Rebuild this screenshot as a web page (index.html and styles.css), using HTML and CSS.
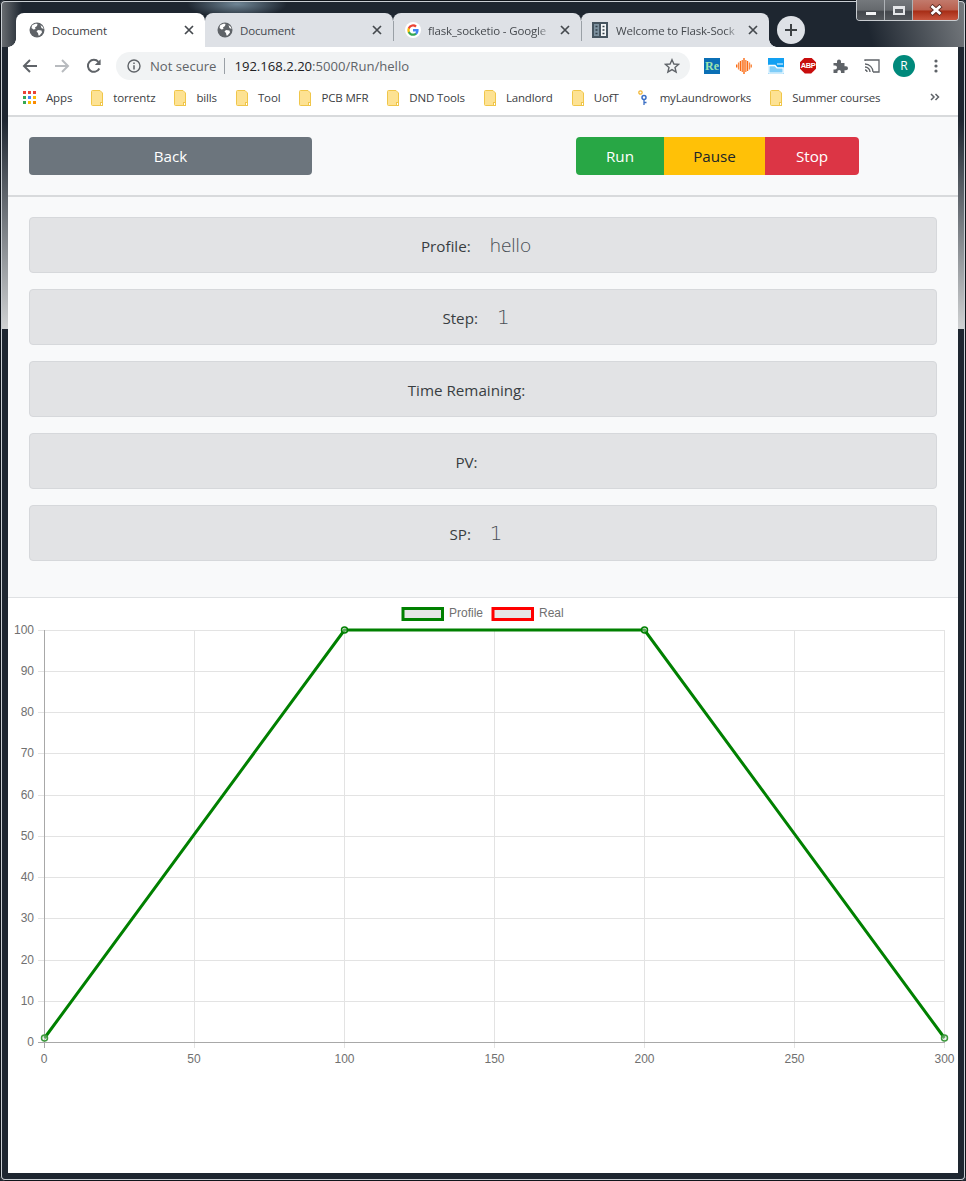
FILE: index.html
```html
<!DOCTYPE html>
<html lang="en">
<head>
<meta charset="utf-8">
<title>Document</title>
<link rel="stylesheet" href="styles.css">
</head>
<body>
<div class="window">
  <div class="wincontrols">
    <div class="wc wc-min"><span class="wc-min-bar"></span></div>
    <div class="wc wc-max"><span class="wc-max-box"></span></div>
    <div class="wc wc-close">
      <svg width="16" height="12" viewBox="0 0 16 12"><path d="M3 1.500 L13 10.500 M13 1.500 L3 10.500" stroke="#5b2a22" stroke-width="4.500"/><path d="M3.500 2 L12.500 10 M12.500 2 L3.500 10" stroke="#fff" stroke-width="2.800"/></svg>
    </div>
  </div>
  <div class="tabstrip">
    <div class="tab tab-active">
      <svg class="favicon" viewBox="0 0 16 16"><use href="#globe"/></svg>
      <span class="tab-title">Document</span>
      <svg class="tab-x" viewBox="0 0 10 10"><path d="M1 1 L9 9 M9 1 L1 9"/></svg>
    </div>
    <div class="tab">
      <svg class="favicon" viewBox="0 0 16 16"><use href="#globe"/></svg>
      <span class="tab-title">Document</span>
      <svg class="tab-x" viewBox="0 0 10 10"><path d="M1 1 L9 9 M9 1 L1 9"/></svg>
    </div>
    <div class="tab tab-sep">
      <svg class="favicon" viewBox="0 0 16 16">
        <circle cx="8" cy="8" r="8" fill="#fff"/>
        <path d="M13.600 8.200c0-.5 0-.9-.1-1.300H8v2.500h3.100a2.700 2.700 0 0 1-1.100 1.700v1.400h1.800c1.100-1 1.800-2.500 1.800-4.300z" fill="#4285f4"/>
        <path d="M8 13.800c1.500 0 2.800-.5 3.800-1.400L10 11c-.5.300-1.200.6-2 .6-1.500 0-2.800-1-3.200-2.400H2.900v1.500A5.800 5.800 0 0 0 8 13.800z" fill="#34a853"/>
        <path d="M4.800 9.200a3.500 3.500 0 0 1 0-2.300V5.400H2.900a5.800 5.800 0 0 0 0 5.300z" fill="#fbbc05"/>
        <path d="M8 4.500c.9 0 1.600.3 2.200.9l1.600-1.600A5.800 5.800 0 0 0 2.900 5.400l1.900 1.500C5.200 5.500 6.500 4.500 8 4.500z" fill="#ea4335"/>
      </svg>
      <span class="tab-title tab-fade">flask_socketio - Google</span>
      <svg class="tab-x" viewBox="0 0 10 10"><path d="M1 1 L9 9 M9 1 L1 9"/></svg>
    </div>
    <div class="tab tab-sep tab-last">
      <svg class="favicon" viewBox="0 0 16 16">
        <rect x=".5" y=".5" width="15" height="15" fill="#46545f" stroke="#46545f"/>
        <rect x="2" y="2" width="5" height="12" fill="#7d919f"/>
        <rect x="9" y="2" width="5" height="12" fill="#f4f6f7"/>
        <path d="M3.500 4.500h2M3.500 8h2M3.500 11.500h2" stroke="#33404a" stroke-width="1.300"/>
        <path d="M10.500 4.500h2M10.500 8h2M10.500 11.500h2" stroke="#33404a" stroke-width="1.300"/>
      </svg>
      <span class="tab-title tab-fade">Welcome to Flask-Sock</span>
      <svg class="tab-x" viewBox="0 0 10 10"><path d="M1 1 L9 9 M9 1 L1 9"/></svg>
    </div>
    <div class="newtab">
      <svg width="14" height="14" viewBox="0 0 14 14"><path d="M7 1 V13 M1 7 H13" stroke="#3c4043" stroke-width="2"/></svg>
    </div>
  </div>

  <div class="toolbar">
    <div class="navbtn">
      <svg width="16" height="16" viewBox="0 0 16 16"><path d="M15 8H2 M8 2 L2 8 L8 14" class="nav-stroke"/></svg>
    </div>
    <div class="navbtn">
      <svg width="16" height="16" viewBox="0 0 16 16"><path d="M1 8H14 M8 2 L14 8 L8 14" class="nav-stroke nav-off"/></svg>
    </div>
    <div class="navbtn">
      <svg width="16" height="16" viewBox="0 0 16 16"><path d="M13.300 10.500 A6 6 0 1 1 12.400 3.800" class="nav-stroke"/><path d="M14.600 1.200 V7 H8.800 Z" fill="#5f6368"/></svg>
    </div>
    <div class="omnibox">
      <svg class="info" width="14" height="14" viewBox="0 0 14 14"><circle cx="7" cy="7" r="6" fill="none" stroke="#5f6368" stroke-width="1.400"/><path d="M7 6.200V10.400 M7 3.600V5" stroke="#5f6368" stroke-width="1.500"/></svg>
      <span class="notsecure">Not secure</span>
      <span class="omni-sep"></span>
      <span class="url"><span class="url-host">192.168.2.20</span>:5000/Run/hello</span>
      <svg class="star" width="16" height="16" viewBox="0 0 16 16"><path d="M8 1.700 L9.900 6 L14.500 6.400 L11 9.500 L12.100 14 L8 11.600 L3.900 14 L5 9.500 L1.500 6.400 L6.100 6 Z" fill="none" stroke="#5f6368" stroke-width="1.400"/></svg>
    </div>
    <div class="extensions">
      <div class="ext ext-re">Re</div>
      <svg class="ext" viewBox="0 0 16 16">
        <path d="M.7 6.500v3 M4.500 3v10 M8 0v16 M11.500 3v10" stroke="#fb6a12" stroke-width="1.400"/>
        <path d="M2.600 4.500v7 M6.300 2v12 M9.800 2v12 M13.500 4.500v7 M15.300 6.500v3" stroke="#f98b45" stroke-width="1.400"/>
      </svg>
      <svg class="ext" viewBox="0 0 16 16"><rect width="16" height="16" fill="#12a0f2"/><path d="M.8 15.200V7.500H7L9 9.800H15.200V15.200Z" fill="#7fcdf8" stroke="#fff" stroke-width="1.300"/><path d="M9 6H15" stroke="#fff"/></svg>
      <div class="ext ext-abp">ABP</div>
      <svg class="ext" viewBox="0 0 16 16"><path d="M1.500 5H5V3.500a2 2 0 0 1 4 0V5h3.500v3.300H14a2 2 0 0 1 0 4h-1.500V15H9v-1.300a1.800 1.800 0 0 0-3.600 0V15H1.500v-3.500H3a2 2 0 0 0 0-4H1.500z" fill="#5f6368"/></svg>
      <svg class="ext" viewBox="0 0 16 16"><path d="M1 3V2h14v12H9" fill="none" stroke="#5f6368" stroke-width="1.300"/><path d="M1 6a8 8 0 0 1 8 8 M1 9a5 5 0 0 1 5 5 M1 12a2 2 0 0 1 2 2" fill="none" stroke="#5f6368" stroke-width="1.300"/></svg>
    </div>
    <div class="avatar">R</div>
    <svg class="menu" width="4" height="14" viewBox="0 0 4 14"><circle cx="2" cy="2" r="1.600"/><circle cx="2" cy="7" r="1.600"/><circle cx="2" cy="12" r="1.600"/></svg>
  </div>

  <div class="bookmarks">
    <div class="bm">
      <svg class="bm-apps" width="13" height="13" viewBox="0 0 13 13">
        <rect x="0" y="0" width="3" height="3" fill="#ea4335"/><rect x="5" y="0" width="3" height="3" fill="#ea4335"/><rect x="10" y="0" width="3" height="3" fill="#ea4335"/>
        <rect x="0" y="5" width="3" height="3" fill="#34a853"/><rect x="5" y="5" width="3" height="3" fill="#4285f4"/><rect x="10" y="5" width="3" height="3" fill="#fbbc05"/>
        <rect x="0" y="10" width="3" height="3" fill="#34a853"/><rect x="5" y="10" width="3" height="3" fill="#fbbc05"/><rect x="10" y="10" width="3" height="3" fill="#fb8c00"/>
      </svg>Apps
    </div>
    <div class="bm"><svg class="folder"><use href="#folder"/></svg>torrentz</div>
    <div class="bm"><svg class="folder"><use href="#folder"/></svg>bills</div>
    <div class="bm"><svg class="folder"><use href="#folder"/></svg>Tool</div>
    <div class="bm"><svg class="folder"><use href="#folder"/></svg>PCB MFR</div>
    <div class="bm"><svg class="folder"><use href="#folder"/></svg>DND Tools</div>
    <div class="bm"><svg class="folder"><use href="#folder"/></svg>Landlord</div>
    <div class="bm"><svg class="folder"><use href="#folder"/></svg>UofT</div>
    <div class="bm">
      <svg class="folder" viewBox="0 0 12 16"><circle cx="2.500" cy="2.500" r="1.700" fill="none" stroke="#f2b632" stroke-width="1.200"/><circle cx="6" cy="7.500" r="2" fill="none" stroke="#3b6fc4" stroke-width="1.500"/><path d="M6 9.500V15 M6 12.500h2.500" stroke="#3b6fc4" stroke-width="1.300"/></svg>myLaundroworks
    </div>
    <div class="bm"><svg class="folder"><use href="#folder"/></svg>Summer courses</div>
    <svg class="bm-more" width="10" height="8" viewBox="0 0 10 8"><path d="M1 1 L4 4 L1 7 M5.500 1 L8.500 4 L5.500 7" fill="none" stroke="#5f6368" stroke-width="1.500"/></svg>
  </div>

  <main class="page">
    <section class="controls">
      <div class="btn btn-back">Back</div>
      <div class="btn-group">
        <div class="btn btn-run">Run</div>
        <div class="btn btn-pause">Pause</div>
        <div class="btn btn-stop">Stop</div>
      </div>
    </section>
    <section class="status">
      <div class="alert">Profile: <span class="value">hello</span></div>
      <div class="alert">Step: <span class="value value-num">1</span></div>
      <div class="alert">Time Remaining: <span class="value"></span></div>
      <div class="alert">PV: <span class="value"></span></div>
      <div class="alert">SP: <span class="value value-num">1</span></div>
    </section>
    <section class="chart">
      <svg class="chart-svg" width="950" height="575" viewBox="8 598 950 575">
        <g class="grid">
          <path d="M194.500 630V1048 M344.500 630V1048 M494.500 630V1048 M644.500 630V1048 M794.500 630V1048 M944.500 630V1048"/>
          <path d="M38 630.500H945 M38 671.500H945 M38 712.500H945 M38 753.500H945 M38 795.500H945 M38 836.500H945 M38 877.500H945 M38 918.500H945 M38 960.500H945 M38 1001.500H945"/>
        </g>
        <g class="axis">
          <path d="M44.500 630V1048 M38 1042.500H945"/>
        </g>
        <g class="ticks ticks-y">
          <text x="34" y="634">100</text><text x="34" y="675">90</text><text x="34" y="716">80</text><text x="34" y="757">70</text><text x="34" y="799">60</text><text x="34" y="840">50</text><text x="34" y="881">40</text><text x="34" y="922">30</text><text x="34" y="964">20</text><text x="34" y="1005">10</text><text x="34" y="1046">0</text>
        </g>
        <g class="ticks ticks-x">
          <text x="44" y="1063">0</text><text x="194" y="1063">50</text><text x="344.500" y="1063">100</text><text x="494.500" y="1063">150</text><text x="644.500" y="1063">200</text><text x="794.500" y="1063">250</text><text x="944.500" y="1063">300</text>
        </g>
        <polyline class="series" points="44.500,1038 344.500,630 644.500,630 944.500,1038"/>
        <g class="points">
          <circle class="pt-end" cx="44.500" cy="1038" r="3"/><circle cx="344.500" cy="630" r="3"/><circle cx="644.500" cy="630" r="3"/><circle class="pt-end" cx="944.500" cy="1038" r="3"/>
        </g>
        <rect class="legend-box legend-green" x="403" y="608.500" width="39.500" height="11"/>
        <text class="legend-text" x="449" y="617">Profile</text>
        <rect class="legend-box legend-red" x="493" y="608.500" width="39.500" height="11"/>
        <text class="legend-text" x="539" y="617">Real</text>
      </svg>
    </section>
  </main>
</div>

<svg class="defs" width="0" height="0">
  <defs>
    <symbol id="globe" viewBox="0 0 16 16">
      <circle cx="8" cy="8" r="7.500" fill="#5f6368"/>
      <path d="M3 3.500 C5 2 7 1.500 8.500 2 L8 4 L6 5.500 L6.500 7 L4.500 7.500 L2.500 6 Z M9 8 L12.500 8.500 L13 10.500 L10.500 13.500 L9.500 13.500 L9 11 L7.500 9.500 Z M11.500 3 L14 5 L14.500 7 L12.500 6 Z" fill="#fff"/>
    </symbol>
    <symbol id="folder" viewBox="0 0 12 16">
      <path d="M1.500.5H9L11.500 3V12.500H9.500V15.500H1.500a1 1 0 0 1-1-1V1.500a1 1 0 0 1 1-1z" fill="#fde293" stroke="#f0c64a"/>
      <rect x="9.500" y="12.500" width="2" height="3" fill="#fff" stroke="#f0c64a"/>
    </symbol>
  </defs>
</svg>
</body>
</html>
```

FILE: styles.css
```css
* { box-sizing: border-box; }

html, body {
  margin: 0;
  padding: 0;
  width: 966px;
  height: 1181px;
  overflow: hidden;
  background: #1e2630;
}

.defs { position: absolute; }

.window {
  position: relative;
  width: 966px;
  height: 1181px;
  padding: 0 8px 8px;
  border-radius: 5px;
  box-shadow: inset 0 0 0 1px #10151b, inset 0 0 0 2px #c9ced3;
  background:
    radial-gradient(ellipse 50px 14px at 237px 4px, #6f8595 0, rgba(111,133,149,0) 100%),
    linear-gradient(75deg, rgba(122,126,130,0) 35%, #787c80 100%) right top / 150px 47px no-repeat,
    linear-gradient(to right, #6e7276 0, rgba(110,114,118,0) 22px) 0 0 / 100% 47px no-repeat,
    linear-gradient(to bottom, #1e2630 0, #1e2630 120px, #d0d2d3 329px, #1e2630 329px, #1e2630 100%);
  font-family: "Open Sans", "Noto Sans", sans-serif;
}

/* Window caption buttons */
.wincontrols {
  position: absolute;
  top: 0;
  right: 7px;
  display: flex;
  width: 103px;
  height: 21px;
  border: 1px solid #c8ccd0;
  border-top: 0;
  border-radius: 0 0 4px 4px;
  overflow: hidden;
}
.wc {
  display: flex;
  align-items: center;
  justify-content: center;
  height: 100%;
}
.wc-min, .wc-max {
  width: 28px;
  background: linear-gradient(to bottom, #74787c 0, #65696d 50%, #43474c 58%, #54585c 100%);
  border-right: 1px solid #aeb2b6;
}
.wc-close {
  flex: 1;
  background: linear-gradient(to bottom, #c27a6c 0, #b9604f 48%, #a82e17 56%, #c8553e 100%);
}
.wc-min-bar { width: 10px; height: 3px; background: #f2f3f4; margin-top: 6px; }
.wc-max-box { width: 12px; height: 9px; border: 2px solid #e4e6e8; border-top-width: 3px; background: #5a5e63; }

/* Tabs */
.tabstrip {
  display: flex;
  align-items: flex-end;
  height: 47px;
  padding-left: 8px;
}
.tab {
  display: flex;
  align-items: center;
  position: relative;
  width: 188px;
  height: 34px;
  padding: 0 11px 0 12px;
  background: #dee1e6;
  border-radius: 8px 8px 0 0;
  font-size: 11.500px;
  letter-spacing: -.15px;
  color: #45494e;
}
.tab-active {
  width: 189px;
  padding-left: 13px;
  background: #fff;
  color: #3c4043;
}
.tab-active::after, .tab-last::after {
  content: "";
  position: absolute;
  bottom: 0;
  width: 8px;
  height: 8px;
}
.tab-active::after {
  left: -8px;
  background: radial-gradient(circle at 0 0, transparent 7.500px, #fff 8px);
}
.tab-last::after {
  right: -8px;
  background: radial-gradient(circle at 100% 0, transparent 7.500px, #dee1e6 8px);
}
.tab-sep::before {
  content: "";
  position: absolute;
  left: 0;
  top: 8px;
  width: 1px;
  height: 20px;
  background: #9aa0a6;
}
.tab-last { padding-left: 11px; }
.favicon { width: 16px; height: 16px; flex: none; }
.tab-title {
  flex: 1;
  min-width: 0;
  margin-left: 7px;
  white-space: nowrap;
}
.tab-last .tab-title { margin-left: 8px; }
.tab-fade {
  -webkit-mask-image: linear-gradient(to right, #000 88%, transparent 100%);
  mask-image: linear-gradient(to right, #000 88%, transparent 100%);
}
.tab-x {
  flex: none;
  width: 10px;
  height: 10px;
  margin-left: 8px;
  stroke: #45494e;
  stroke-width: 1.700;
  fill: none;
}
.newtab {
  display: flex;
  align-items: center;
  justify-content: center;
  width: 28px;
  height: 28px;
  margin: 0 0 3px 8px;
  border-radius: 50%;
  background: #dee1e6;
}

/* Toolbar */
.toolbar {
  display: flex;
  align-items: center;
  height: 37px;
  padding-left: 6px;
  background: #fff;
}
.navbtn {
  display: flex;
  align-items: center;
  justify-content: center;
  width: 32px;
  height: 28px;
}
.nav-stroke { fill: none; stroke: #5f6368; stroke-width: 2; }
.nav-off { stroke: #b8bbbf; }
.omnibox {
  display: flex;
  align-items: center;
  width: 574px;
  height: 28px;
  margin-left: 6px;
  padding: 0 10px 0 11px;
  border-radius: 14px;
  background: #f1f3f4;
  font-size: 13.100px;
  color: #5f6368;
}
.notsecure { margin-left: 9px; }
.omni-sep { width: 1px; height: 16px; margin: 0 9px 0 8px; background: #9aa0a6; }
.url { flex: 1; white-space: nowrap; }
.url-host { color: #202124; }
.extensions {
  display: flex;
  align-items: center;
  gap: 16px;
  margin-left: 14px;
}
.ext { width: 16px; height: 16px; flex: none; display: block; }
.ext-re {
  background: #0b6fb5;
  color: #9fe6b0;
  font: bold 12px/16px "Liberation Serif", serif;
  text-align: center;
}
.ext-abp {
  background: #c80d0d;
  color: #fff;
  font: bold 7.500px/16px "Liberation Sans", sans-serif;
  letter-spacing: -.4px;
  text-align: center;
  clip-path: polygon(30% 0, 70% 0, 100% 30%, 100% 70%, 70% 100%, 30% 100%, 0 70%, 0 30%);
}
.avatar {
  display: flex;
  align-items: center;
  justify-content: center;
  width: 22px;
  height: 22px;
  margin-left: 13px;
  border-radius: 50%;
  background: #00897b;
  color: #fff;
  font-size: 12px;
}
.menu { margin-left: 19px; fill: #5f6368; }

/* Bookmarks */
.bookmarks {
  display: flex;
  align-items: center;
  gap: 19px;
  height: 33px;
  padding: 0 0 4px 15px;
  background: #fff;
  border-bottom: 2px solid #d8dadc;
  font-size: 11.500px;
  letter-spacing: -.15px;
  color: #3c4043;
  position: relative;
}
.bm { display: flex; align-items: center; white-space: nowrap; }
.bm-apps { margin-right: 10px; }
.folder { width: 12px; height: 16px; margin-right: 10px; flex: none; }
.bm-more { position: absolute; right: 18px; top: 9px; }

/* Page */
.page {
  height: 1056px;
  background: #f8f9fa;
  color: #212529;
  font-size: 15.200px;
}
.controls {
  display: flex;
  height: 80px;
  padding: 20px 0 0 21px;
  border-bottom: 2px solid #d8dadc;
}
.btn {
  display: flex;
  align-items: center;
  justify-content: center;
  height: 38px;
}
.btn-back {
  width: 283px;
  border-radius: 4px;
  background: #6c757d;
  color: #fff;
}
.btn-group { display: flex; margin-left: 264px; border-radius: 4px; overflow: hidden; height: 38px; }
.btn-run { width: 88px; background: #28a745; color: #fff; }
.btn-pause { width: 101px; background: #ffc107; color: #212529; }
.btn-stop { width: 94px; background: #dc3545; color: #fff; }

.status {
  display: flex;
  flex-direction: column;
  gap: 16px;
  height: 401px;
  padding: 20px 21px 0;
  border-bottom: 1px solid #dfe1e3;
}
.alert {
  height: 56px;
  line-height: 57px;
  border: 1px solid #d6d8db;
  border-radius: 4px;
  background: #e2e3e5;
  color: #383d41;
  text-align: center;
  white-space: pre-wrap;
}
.value {
  display: inline-block;
  padding: 0 14px 0 15px;
  font-size: 19px;
  font-weight: 300;
  line-height: 1;
  color: #4a5056;
}
.value-num {
  font-family: "DejaVu Sans", sans-serif;
  font-size: 20px;
  font-weight: 200;
}

.chart { height: 575px; background: #fff; }
.chart-svg { display: block; }
.grid path { stroke: #e3e3e3; stroke-width: 1; fill: none; }
.axis path { stroke: #a8a8a8; stroke-width: 1; fill: none; }
.ticks text, .legend-text {
  font-family: "Liberation Sans", Arial, sans-serif;
  font-size: 12px;
  fill: #707070;
}
.ticks-y text { text-anchor: end; }
.ticks-x text { text-anchor: middle; }
.series { fill: none; stroke: #008000; stroke-width: 3; }
.points circle { fill: #e6e6e6; fill-opacity: .4; stroke: #008000; stroke-width: 1.500; }
.points .pt-end { stroke: #3c9a3c; fill: #e6e6e6; }
.legend-box { fill: #e6e6e6; stroke-width: 3; }
.legend-green { stroke: #008000; }
.legend-red { stroke: #ff0000; }
```
